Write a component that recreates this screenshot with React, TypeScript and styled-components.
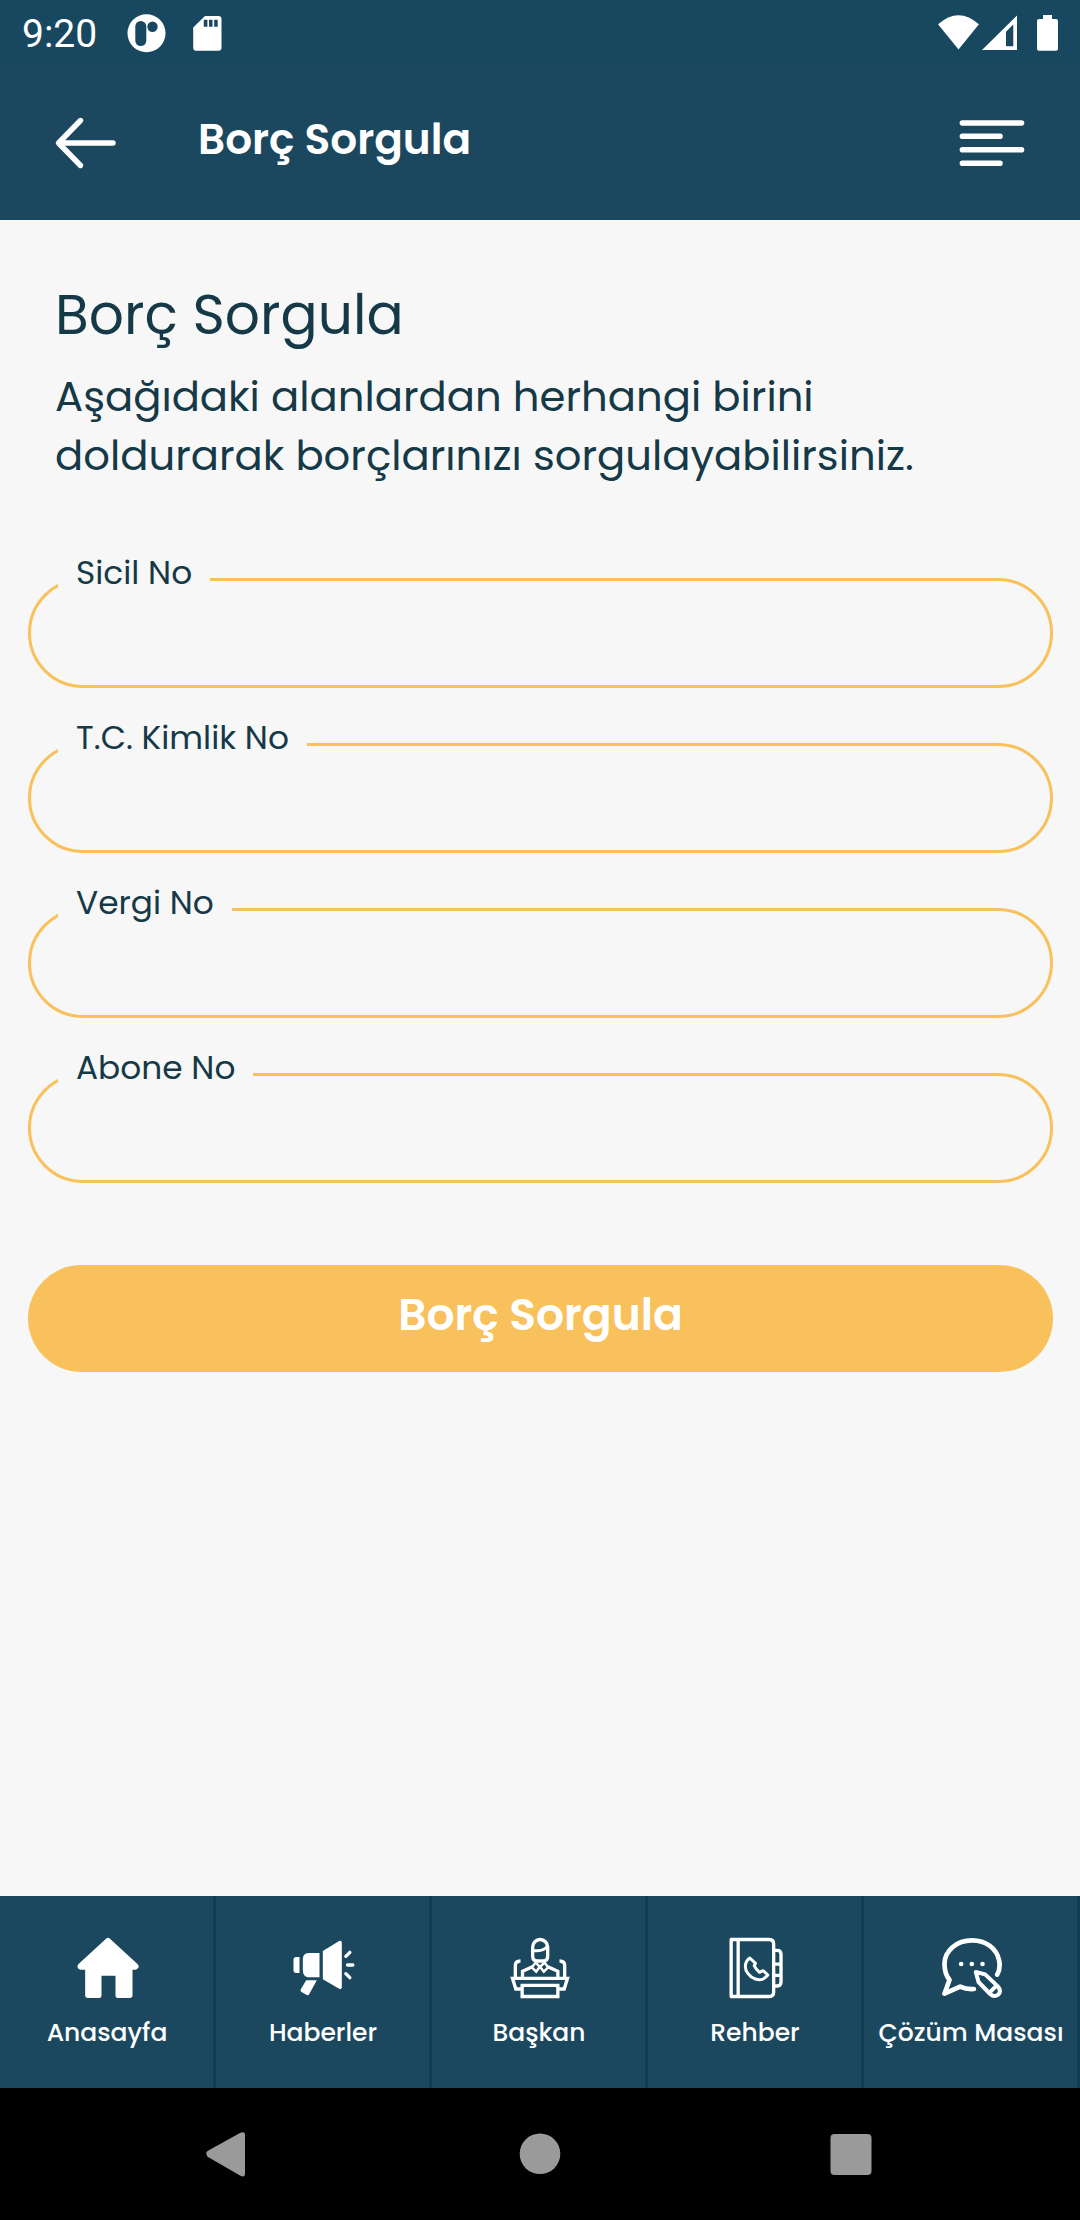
import React from "react";
import styled, { createGlobalStyle } from "styled-components";

const colors = {
  status: "#18485f",
  primary: "#1c485f",
  divider: "#113d55",
  accent: "#f9c15c",
  ink: "#153947",
  page: "#f7f7f7",
  system: "#9a9a9a",
};

const GlobalStyle = createGlobalStyle`
  * { box-sizing: border-box; }
  body {
    margin: 0;
    background: ${colors.page};
    font-family: Poppins, Inter, "Noto Sans", sans-serif;
    font-feature-settings: "cv11" 1;
  }
`;

const Screen = styled.div`
  display: flex;
  flex-direction: column;
  width: 1080px;
  height: 2220px;
  background: ${colors.page};
  color: ${colors.ink};
`;

const StatusBar = styled.div`
  display: flex;
  align-items: center;
  justify-content: space-between;
  height: 64px;
  padding: 0 19px 0 22px;
  background: ${colors.status};
  color: #fff;
`;

const StatusGroup = styled.div<{ $gap: number }>`
  display: flex;
  align-items: center;
  gap: ${(p) => p.$gap}px;
`;

const Clock = styled.span`
  padding-top: 4px;
  margin-right: 3px;
  font-family: Roboto, sans-serif;
  font-size: 39px;
  line-height: 64px;
`;

const Header = styled.header`
  display: flex;
  align-items: flex-start;
  height: 156px;
  padding: 46px 52px 0 52px;
  background: ${colors.primary};
  color: #fff;
`;

const IconButton = styled.button`
  display: flex;
  width: 68px;
  height: 66px;
  padding: 0;
  border: 0;
  background: none;
  color: inherit;
`;

const HeaderTitle = styled.h1`
  flex: 1;
  margin: 0 0 0 78px;
  font-size: 42.2px;
  font-weight: 600;
  line-height: 60px;
`;

const Content = styled.main`
  flex: 1;
  padding: 65px 27px 0 28px;
`;

const Heading = styled.h2`
  margin: 0 0 22px 27px;
  font-size: 55px;
  font-weight: 400;
  line-height: 60px;
`;

const Intro = styled.p`
  width: 920px;
  margin: 0 0 74px 27px;
  font-size: 41.75px;
  line-height: 59px;
`;

const Form = styled.form`
  display: flex;
  flex-direction: column;
  gap: 36px;
`;

const Field = styled.fieldset`
  height: 129px;
  margin: 0;
  padding: 0 40px;
  border: 3px solid ${colors.accent};
  border-radius: 55px;
`;

const FieldLabel = styled.legend`
  height: 41px;
  margin-left: -13px;
  padding: 0 18px 14px 18px;
  font-size: 32.8px;
  line-height: 27px;
`;

const FieldInput = styled.input`
  display: block;
  width: 100%;
  height: 70px;
  border: 0;
  outline: 0;
  background: transparent;
  color: inherit;
  font: inherit;
  font-size: 34px;
`;

const SubmitButton = styled.button`
  height: 107px;
  margin-top: 46px;
  padding: 0 0 8px;
  border: 0;
  border-radius: 54px;
  background: ${colors.accent};
  color: #fff;
  font: inherit;
  font-size: 44px;
  font-weight: 600;
`;

const TabBar = styled.nav`
  display: grid;
  grid-template-columns: repeat(5, 1fr);
  height: 192px;
  background: ${colors.primary};
`;

const Tab = styled.a`
  display: flex;
  flex-direction: column;
  align-items: center;
  gap: 17px;
  padding-top: 40px;
  border-right: 3px solid ${colors.divider};
  color: #fff;
`;

const TabIcon = styled.svg`
  width: 64px;
  height: 64px;
  fill: none;
  stroke: #fff;
  stroke-width: 10;
`;

const TabLabel = styled.span`
  padding-left: 1px;
  font-size: 25px;
  font-weight: 500;
  line-height: 32px;
  white-space: nowrap;
`;

const SystemBar = styled.div`
  display: flex;
  justify-content: center;
  align-items: center;
  gap: 269px;
  height: 132px;
  background: #000;
`;

const SystemIcon = styled.svg`
  display: block;
  width: 42px;
  height: 46px;
  overflow: visible;
  fill: ${colors.system};
`;

const HomeIcon = () => (
  <TabIcon viewBox="223.5 168 192 192">
    <path d="M322.5 184 L404 259 H241 Z" fill="#fff" strokeWidth="20" strokeLinejoin="round" />
    <path
      d="M254 255 V346 Q254 354 262 354 H296 Q303 354 303 347 V287 H345 V347 Q345 354 352 354 H388 Q396 354 396 346 V255 Z"
      fill="#fff"
      stroke="none"
    />
  </TabIcon>
);

const MegaphoneIcon = () => (
  <TabIcon viewBox="871.5 168 192 192">
    <g fill="#fff" stroke="none">
      <path d="M897 231 V279 H887 Q879 279 879 271 V239 Q879 231 887 231 Z" />
      <path d="M957 219 V292 H924 Q907 289 907 272 V237 Q907 221 924 219 Z" />
      <path d="M967 213 L1016 183 Q1024 180 1024 189 V321 Q1024 330 1016 326 L967 298 Z" />
      <path d="M917 301 H949 L926 343 Q923 347 919 345 L903 336 Q898 333 901 328 Z" />
    </g>
    <path d="M1036 229 L1048 217 M1041 255 H1057 M1036 281 L1048 293" strokeLinecap="round" />
  </TabIcon>
);

const PodiumIcon = () => (
  <TabIcon viewBox="229.5 168 192 192">
    <path d="M306.5 201 A22.5 22.5 0 0 1 351.5 201 V229 Q351.5 243 338 243 H320 Q306.5 243 306.5 229 Z" />
    <path d="M307 212 H320 Q342 212 351 198" strokeWidth="9" />
    <path d="M317 246 L304 262 L317 275 L328 260 L340 275 L353 262 L341 246 M317 249 L328 261 L341 249" strokeWidth="7.5" />
    <path d="M276 293 V274 L306 260 M382 293 V274 L352 260" />
    <path d="M254.5 293 V256 Q254.5 243 270 243 M402.5 293 V256 Q402.5 243 387 243" />
    <path d="M272 327 H256 L246 295 H411 L401 327 H385" />
    <path d="M275 316 H382 V349.5 H275 Z" />
  </TabIcon>
);

const PhoneBookIcon = () => (
  <TabIcon viewBox="877.5 168 192 192">
    <path d="M902 178.5 H1016 Q1029.5 178.5 1029.5 192 V336 Q1029.5 349.5 1016 349.5 H902 Z" strokeLinejoin="round" />
    <path d="M923 178 V350" />
    <path d="M1031 211 H1040 Q1051.5 211 1051.5 223 V306 Q1051.5 318 1040 318 H1031 M1031 252.5 H1051 M1031 286 H1051" />
    <path
      d="M958 234 C943 244 940 264 952 280 C964 297 985 303 998 297 Q1006 292 1012 285 L998 272 L987 277 Q977 269 971 257 L975 250 Z"
      strokeWidth="9"
      strokeLinejoin="round"
    />
  </TabIcon>
);

const ChatPencilIcon = () => (
  <TabIcon viewBox="235.5 168 192 192">
    <path
      d="M410 284 C418 270 419 258 416 242 C409 205 376 181 335 181 C288 181 252 212 252 252 C252 271 257 287 267 300 L252 341 L299 320 C312 326 325 328 340 327"
      strokeWidth="14"
      strokeLinecap="round"
      strokeLinejoin="round"
    />
    <g fill="#fff" stroke="none">
      <circle cx="302" cy="252" r="7" />
      <circle cx="334" cy="252" r="7" />
      <circle cx="366" cy="252" r="7" />
    </g>
    <path
      d="M346 276 L374 283 L412 319 Q424 333 413 344 Q401 353 389 342 L354 306 Z M387 338 L408 317"
      strokeWidth="12"
      strokeLinejoin="round"
    />
  </TabIcon>
);

const fields = ["Sicil No", "T.C. Kimlik No", "Vergi No", "Abone No"];

const tabs = [
  { label: "Anasayfa", Icon: HomeIcon },
  { label: "Haberler", Icon: MegaphoneIcon },
  { label: "Başkan", Icon: PodiumIcon },
  { label: "Rehber", Icon: PhoneBookIcon },
  { label: "Çözüm Masası", Icon: ChatPencilIcon },
];

export default function App() {
  return (
    <Screen>
      <GlobalStyle />
      <StatusBar>
        <StatusGroup $gap={27}>
          <Clock>9:20</Clock>
          <svg width="39" height="64" viewBox="127 0 39 64">
            <circle cx="146.5" cy="33.3" r="19" fill="#fff" />
            <rect x="135.3" y="21" width="11" height="25" rx="5.5" fill={colors.status} />
            <circle cx="152.5" cy="26.7" r="5.2" fill={colors.status} />
          </svg>
          <svg width="29" height="64" viewBox="193 0 29 64">
            <path
              fill="#fff"
              fillRule="evenodd"
              d="M205 16 H218.5 Q221.5 16 221.5 19 V47.7 Q221.5 50.7 218.5 50.7 H196.2 Q193.2 50.7 193.2 47.7 V27.5 Z M203.8 19.7 V26.7 H207.4 V19.7 Z M209 19.7 V26.7 H212.5 V19.7 Z M214.2 19.7 V26.7 H217.7 V19.7 Z"
            />
          </svg>
        </StatusGroup>
        <StatusGroup $gap={0}>
          <svg width="123" height="64" viewBox="938 0 123 64" fill="#fff">
            <path d="M958.5 49.5 L938 24.3 Q958.5 6 979 24.3 Z" />
            <path fillRule="evenodd" d="M982 50 L1017 15.5 V50 Z M1006 46.3 H1013.3 V24.5 L1006 31.7 Z" />
            <path d="M1043 15 H1052 V19 H1056 Q1058 19 1058 21 V48.7 Q1058 50.7 1056 50.7 H1039 Q1037 50.7 1037 48.7 V21 Q1037 19 1039 19 H1043 Z" />
          </svg>
        </StatusGroup>
      </StatusBar>

      <Header>
        <IconButton aria-label="Geri">
          <svg width="68" height="66" viewBox="52 110 68 66" fill="none" stroke="#fff" strokeWidth="5.4" strokeLinecap="round" strokeLinejoin="round">
            <path d="M113 143 H59 M80.5 120.5 L58.5 143 L80.5 165.5" />
          </svg>
        </IconButton>
        <HeaderTitle>Borç Sorgula</HeaderTitle>
        <IconButton aria-label="Menü">
          <svg width="68" height="66" viewBox="960 110 68 66" overflow="visible" fill="none" stroke="#fff" strokeWidth="5.6" strokeLinecap="round">
            <path d="M962.4 123 H1021.5 M962.4 136.3 H1000 M962.4 149.8 H1021.5 M962.4 163.2 H1000" />
          </svg>
        </IconButton>
      </Header>

      <Content>
        <Heading>Borç Sorgula</Heading>
        <Intro>Aşağıdaki alanlardan herhangi birini doldurarak borçlarınızı sorgulayabilirsiniz.</Intro>
        <Form>
          {fields.map((label) => (
            <Field key={label}>
              <FieldLabel>{label}</FieldLabel>
              <FieldInput aria-label={label} />
            </Field>
          ))}
          <SubmitButton type="button">Borç Sorgula</SubmitButton>
        </Form>
      </Content>

      <TabBar>
        {tabs.map(({ label, Icon }) => (
          <Tab key={label}>
            <Icon />
            <TabLabel>{label}</TabLabel>
          </Tab>
        ))}
      </TabBar>

      <SystemBar>
        <SystemIcon viewBox="208 2131 42 46">
          <path d="M206.5 2154.5 Q205.5 2152.5 207.5 2151 L240 2133 Q245 2131 245 2135 V2173.5 Q245 2178 240 2175.5 L208 2157 Q206.8 2156 206.5 2154.5 Z" />
        </SystemIcon>
        <SystemIcon viewBox="519 2131 42 46">
          <circle cx="540" cy="2153.8" r="20.3" />
        </SystemIcon>
        <SystemIcon viewBox="829.5 2131 42 46">
          <rect x="830" y="2134" width="41" height="41" rx="4" />
        </SystemIcon>
      </SystemBar>
    </Screen>
  );
}
